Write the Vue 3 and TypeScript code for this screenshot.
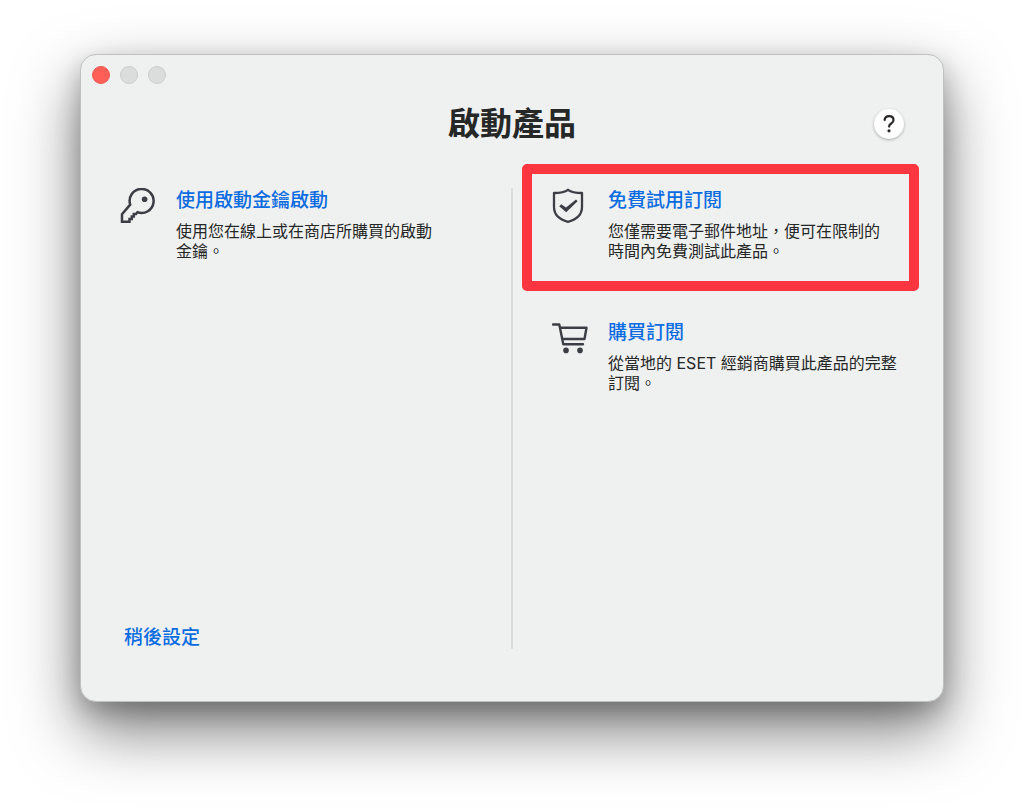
<script setup lang="ts">
type IconName = 'key' | 'shield' | 'cart'

interface Option {
  icon: IconName
  title: string
  lines: string[]
  highlighted?: boolean
}

const keyOptions: Option[] = [
  {
    icon: 'key',
    title: '使用啟動金鑰啟動',
    lines: ['使用您在線上或在商店所購買的啟動', '金鑰。'],
  },
]

const subscriptionOptions: Option[] = [
  {
    icon: 'shield',
    title: '免費試用訂閱',
    lines: ['您僅需要電子郵件地址，便可在限制的', '時間內免費測試此產品。'],
    highlighted: true,
  },
  {
    icon: 'cart',
    title: '購買訂閱',
    lines: ['從當地的 ESET 經銷商購買此產品的完整', '訂閱。'],
  },
]

const columns = [
  { id: 'key', options: keyOptions },
  { id: 'subscription', options: subscriptionOptions },
]
</script>

<template>
  <div class="desktop">
    <section class="window" aria-labelledby="window-title">
      <div class="titlebar">
        <button class="light close" type="button" aria-label="關閉"></button>
        <button class="light" type="button" aria-label="最小化" disabled></button>
        <button class="light" type="button" aria-label="縮放" disabled></button>
      </div>

      <header class="header">
        <h1 id="window-title" class="title">啟動產品</h1>
        <button class="help" type="button" aria-label="說明">
          <svg viewBox="0 0 30 30" width="30" height="30" aria-hidden="true">
            <path d="M10.6 11C10.9 8.600 12.6 7.200 15 7.200c2.600 0 4.500 1.500 4.500 3.800 0 1.600-.8 2.600-2.300 3.500-1.500.9-2.100 1.600-2.100 3.100" fill="none" stroke="currentColor" stroke-width="2.200" stroke-linecap="round" stroke-linejoin="round" />
            <circle cx="15" cy="21.800" r="1.600" fill="currentColor" />
          </svg>
        </button>
      </header>

      <main class="columns">
        <div v-for="column in columns" :key="column.id" class="column">
          <article
            v-for="option in column.options"
            :key="option.title"
            class="option"
            :class="{ highlighted: option.highlighted }"
          >
            <svg class="icon" viewBox="0 0 36 36" width="36" height="36" aria-hidden="true">
              <g v-if="option.icon === 'key'" fill="none" stroke="currentColor" stroke-width="2.500">
                <path d="M10.200 16.600A12 12 0 1 1 17.500 24.200L16 26H13.800V28.500H11.800V31H9.500V33.700H2V26.200Z" stroke-linejoin="miter" />
                <circle cx="24.600" cy="11.200" r="2.800" fill="currentColor" stroke="none" />
              </g>
              <g v-else-if="option.icon === 'shield'" fill="none" stroke="currentColor">
                <path d="M16 1.800C12.800 4.200 7.500 5 2 5V19c0 8 6.500 12.800 14 14.800 7.500-2 14-6.800 14-14.800V5C24.500 5 19.200 4.200 16 1.800Z" stroke-width="2.300" stroke-linejoin="round" />
                <path d="M7.200 18.200L9.200 16.200L14 19.600L24 11.600L25.600 13.200L14.200 24.200Z" fill="currentColor" stroke="none" />
              </g>
              <g v-else fill="none" stroke="currentColor" stroke-width="2.400" stroke-linejoin="round">
                <path d="M1 4.500H7.300L11.300 24.200H31" stroke-linecap="round" />
                <path d="M8.500 7.800H34.500L32.500 19H10.600" />
                <circle cx="14" cy="30.400" r="2.800" fill="currentColor" stroke="none" />
                <circle cx="28" cy="30.400" r="2.800" fill="currentColor" stroke="none" />
              </g>
            </svg>
            <div class="text">
              <h2 class="option-title"><a class="link" href="#">{{ option.title }}</a></h2>
              <p class="description">
                <span v-for="line in option.lines" :key="line" class="line">{{ line }}</span>
              </p>
            </div>
          </article>
          <a v-if="column.id === 'key'" class="link later" href="#">稍後設定</a>
        </div>
        <div class="divider"></div>
      </main>
    </section>
  </div>
</template>

<style>
body {
  margin: 0;
  background: #ffffff;
}
</style>

<style scoped>
.desktop {
  box-sizing: border-box;
  display: flex;
  min-height: 100vh;
  padding: 54px 80px 106px;
  overflow: hidden;
  font-family: Inter, "Noto Sans CJK TC", sans-serif;
  color: #262727;
}

.window {
  box-sizing: border-box;
  flex: 1;
  display: flex;
  flex-direction: column;
  border: 1px solid #c0c1c1;
  border-radius: 16px;
  background: #eff1f1;
  box-shadow: 0 28px 64px rgba(0, 0, 0, 0.52), 0 10px 24px rgba(0, 0, 0, 0.22);
}

.titlebar {
  display: flex;
  gap: 10px;
  padding: 11px 11px 0;
}

.light {
  box-sizing: border-box;
  width: 18px;
  height: 18px;
  padding: 0;
  border: 1px solid #cbcccc;
  border-radius: 50%;
  background: #dbdcdc;
}

.close {
  border-color: #ee5a53;
  background: #ff5f57;
}

.header {
  display: grid;
  grid-template-columns: 1fr auto 1fr;
  align-items: center;
  padding: 20px 39px 20px;
}

.title {
  grid-column: 2;
  margin: 0;
  font-size: 32px;
  line-height: 40px;
  font-weight: 700;
}

.help {
  justify-self: end;
  width: 30px;
  height: 30px;
  padding: 0;
  border: 0;
  border-radius: 50%;
  background: #ffffff;
  color: #262727;
  box-shadow: 0 1px 3px rgba(0, 0, 0, 0.3);
}

.help svg {
  display: block;
}

.columns {
  flex: 1;
  display: grid;
  grid-template-columns: 1fr 2px 1fr;
  margin-bottom: 52px;
}

.column {
  display: flex;
  flex-direction: column;
  gap: 5px;
  padding: 0 24px 0 9px;
}

.column:nth-child(2) {
  grid-column: 3;
}

.divider {
  grid-column: 2;
  grid-row: 1;
  margin-top: 24px;
  background: #dbdddd;
}

.option {
  box-sizing: border-box;
  display: flex;
  gap: 20px;
  min-height: 127px;
  padding: 14px 10px 11px 20px;
  border: 10px solid transparent;
  border-radius: 5px;
}

.highlighted {
  border-color: #fb3640;
}

.icon {
  flex: none;
  color: #3b3f45;
}

.text {
  padding-top: 1px;
}

.option-title {
  margin: 0 0 8px;
  font-size: 19px;
  line-height: 24px;
  font-weight: 500;
}

.link {
  color: #0b6ce0;
  text-decoration: none;
}

.description {
  margin: 0;
  font-size: 16px;
  line-height: 20px;
}

.line {
  display: block;
  white-space: nowrap;
}

.later {
  align-self: flex-start;
  margin-top: auto;
  margin-left: 34px;
  font-size: 19px;
  line-height: 22px;
  font-weight: 500;
}
</style>
